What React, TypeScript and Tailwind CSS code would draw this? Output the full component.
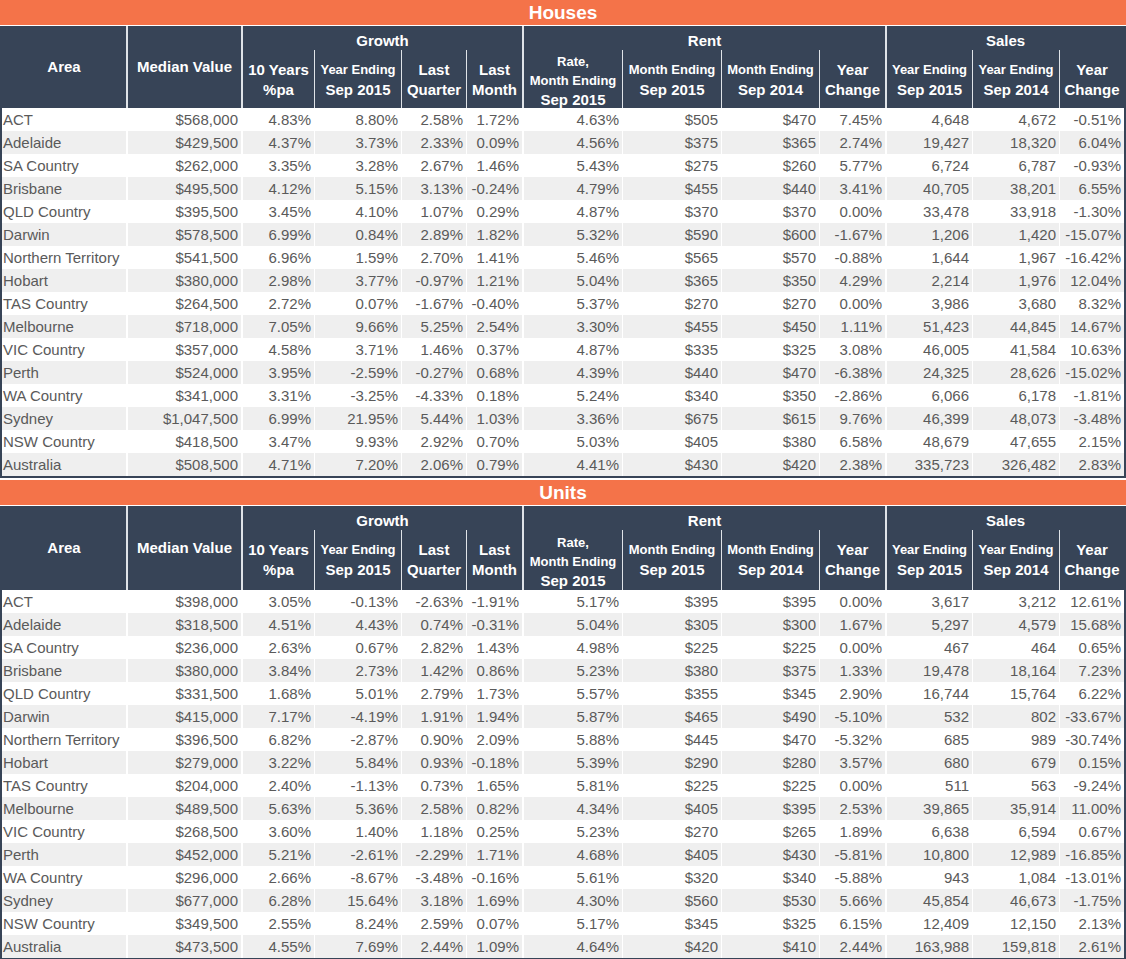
import React from 'react';

type Row = [string, ...string[]];

const houses: Row[] = [
  ['ACT', '$568,000', '4.83%', '8.80%', '2.58%', '1.72%', '4.63%', '$505', '$470', '7.45%', '4,648', '4,672', '-0.51%'],
  ['Adelaide', '$429,500', '4.37%', '3.73%', '2.33%', '0.09%', '4.56%', '$375', '$365', '2.74%', '19,427', '18,320', '6.04%'],
  ['SA Country', '$262,000', '3.35%', '3.28%', '2.67%', '1.46%', '5.43%', '$275', '$260', '5.77%', '6,724', '6,787', '-0.93%'],
  ['Brisbane', '$495,500', '4.12%', '5.15%', '3.13%', '-0.24%', '4.79%', '$455', '$440', '3.41%', '40,705', '38,201', '6.55%'],
  ['QLD Country', '$395,500', '3.45%', '4.10%', '1.07%', '0.29%', '4.87%', '$370', '$370', '0.00%', '33,478', '33,918', '-1.30%'],
  ['Darwin', '$578,500', '6.99%', '0.84%', '2.89%', '1.82%', '5.32%', '$590', '$600', '-1.67%', '1,206', '1,420', '-15.07%'],
  ['Northern Territory', '$541,500', '6.96%', '1.59%', '2.70%', '1.41%', '5.46%', '$565', '$570', '-0.88%', '1,644', '1,967', '-16.42%'],
  ['Hobart', '$380,000', '2.98%', '3.77%', '-0.97%', '1.21%', '5.04%', '$365', '$350', '4.29%', '2,214', '1,976', '12.04%'],
  ['TAS Country', '$264,500', '2.72%', '0.07%', '-1.67%', '-0.40%', '5.37%', '$270', '$270', '0.00%', '3,986', '3,680', '8.32%'],
  ['Melbourne', '$718,000', '7.05%', '9.66%', '5.25%', '2.54%', '3.30%', '$455', '$450', '1.11%', '51,423', '44,845', '14.67%'],
  ['VIC Country', '$357,000', '4.58%', '3.71%', '1.46%', '0.37%', '4.87%', '$335', '$325', '3.08%', '46,005', '41,584', '10.63%'],
  ['Perth', '$524,000', '3.95%', '-2.59%', '-0.27%', '0.68%', '4.39%', '$440', '$470', '-6.38%', '24,325', '28,626', '-15.02%'],
  ['WA Country', '$341,000', '3.31%', '-3.25%', '-4.33%', '0.18%', '5.24%', '$340', '$350', '-2.86%', '6,066', '6,178', '-1.81%'],
  ['Sydney', '$1,047,500', '6.99%', '21.95%', '5.44%', '1.03%', '3.36%', '$675', '$615', '9.76%', '46,399', '48,073', '-3.48%'],
  ['NSW Country', '$418,500', '3.47%', '9.93%', '2.92%', '0.70%', '5.03%', '$405', '$380', '6.58%', '48,679', '47,655', '2.15%'],
  ['Australia', '$508,500', '4.71%', '7.20%', '2.06%', '0.79%', '4.41%', '$430', '$420', '2.38%', '335,723', '326,482', '2.83%'],
];

const units: Row[] = [
  ['ACT', '$398,000', '3.05%', '-0.13%', '-2.63%', '-1.91%', '5.17%', '$395', '$395', '0.00%', '3,617', '3,212', '12.61%'],
  ['Adelaide', '$318,500', '4.51%', '4.43%', '0.74%', '-0.31%', '5.04%', '$305', '$300', '1.67%', '5,297', '4,579', '15.68%'],
  ['SA Country', '$236,000', '2.63%', '0.67%', '2.82%', '1.43%', '4.98%', '$225', '$225', '0.00%', '467', '464', '0.65%'],
  ['Brisbane', '$380,000', '3.84%', '2.73%', '1.42%', '0.86%', '5.23%', '$380', '$375', '1.33%', '19,478', '18,164', '7.23%'],
  ['QLD Country', '$331,500', '1.68%', '5.01%', '2.79%', '1.73%', '5.57%', '$355', '$345', '2.90%', '16,744', '15,764', '6.22%'],
  ['Darwin', '$415,000', '7.17%', '-4.19%', '1.91%', '1.94%', '5.87%', '$465', '$490', '-5.10%', '532', '802', '-33.67%'],
  ['Northern Territory', '$396,500', '6.82%', '-2.87%', '0.90%', '2.09%', '5.88%', '$445', '$470', '-5.32%', '685', '989', '-30.74%'],
  ['Hobart', '$279,000', '3.22%', '5.84%', '0.93%', '-0.18%', '5.39%', '$290', '$280', '3.57%', '680', '679', '0.15%'],
  ['TAS Country', '$204,000', '2.40%', '-1.13%', '0.73%', '1.65%', '5.81%', '$225', '$225', '0.00%', '511', '563', '-9.24%'],
  ['Melbourne', '$489,500', '5.63%', '5.36%', '2.58%', '0.82%', '4.34%', '$405', '$395', '2.53%', '39,865', '35,914', '11.00%'],
  ['VIC Country', '$268,500', '3.60%', '1.40%', '1.18%', '0.25%', '5.23%', '$270', '$265', '1.89%', '6,638', '6,594', '0.67%'],
  ['Perth', '$452,000', '5.21%', '-2.61%', '-2.29%', '1.71%', '4.68%', '$405', '$430', '-5.81%', '10,800', '12,989', '-16.85%'],
  ['WA Country', '$296,000', '2.66%', '-8.67%', '-3.48%', '-0.16%', '5.61%', '$320', '$340', '-5.88%', '943', '1,084', '-13.01%'],
  ['Sydney', '$677,000', '6.28%', '15.64%', '3.18%', '1.69%', '4.30%', '$560', '$530', '5.66%', '45,854', '46,673', '-1.75%'],
  ['NSW Country', '$349,500', '2.55%', '8.24%', '2.59%', '0.07%', '5.17%', '$345', '$325', '6.15%', '12,409', '12,150', '2.13%'],
  ['Australia', '$473,500', '4.55%', '7.69%', '2.44%', '1.09%', '4.64%', '$420', '$410', '2.44%', '163,988', '159,818', '2.61%'],
];

const cols = 'grid grid-cols-[126px_115px_72px_87px_65px_57px_99px_99px_98px_67px_86px_87px_64px]';

// white divider after each column; wider ones at group edges
const divider = [
  'border-r-2', 'border-r-2', 'border-r', 'border-r', 'border-r', 'border-r-2',
  'border-r', 'border-r', 'border-r', 'border-r-2', 'border-r', 'border-r', '',
];

const Sub = ({ top, bottom, last, small }: { top: string; bottom: string; last?: boolean; small?: boolean }) => (
  <div className={`flex flex-col items-center justify-center border-[#dfe3e8] ${last ? 'border-r-2' : 'border-r'}`}>
    <span className={`${small ? 'text-[13px]' : 'text-[15px]'} leading-[20px]`}>{top}</span>
    <span className="text-[15px] leading-[20px]">{bottom}</span>
  </div>
);

const Section = ({ title, rows, headH }: { title: string; rows: Row[]; headH: string }) => (
  <div>
    <div className="h-[25px] bg-[#f47349] flex items-center justify-center text-white font-bold text-[19px] leading-none">
      {title}
    </div>
    <div className="mt-px border-x-2 border-b-2 border-[#374457]">
      <div className={`${cols} grid-rows-[24px_1fr] ${headH} bg-[#374457] text-white font-bold`}>
        <div className="row-span-2 flex items-center justify-center text-[15px] border-r-2 border-[#dfe3e8]">Area</div>
        <div className="row-span-2 flex items-center justify-center text-[15px] border-r-2 border-[#dfe3e8]">Median Value</div>
        <div className="col-span-4 flex items-end justify-center pb-[2px] text-[15px] leading-none border-r-2 border-[#dfe3e8]">Growth</div>
        <div className="col-span-4 flex items-end justify-center pb-[2px] text-[15px] leading-none border-r-2 border-[#dfe3e8]">Rent</div>
        <div className="col-span-3 flex items-end justify-center pb-[2px] text-[15px] leading-none">Sales</div>

        <Sub top="10 Years" bottom="%pa" />
        <Sub top="Year Ending" bottom="Sep 2015" small />
        <Sub top="Last" bottom="Quarter" />
        <Sub top="Last" bottom="Month" last />
        <div className="flex flex-col items-center justify-center border-r border-[#dfe3e8] pt-[2px]">
          <span className="text-[13px] leading-[19px]">Rate,</span>
          <span className="text-[13px] leading-[19px]">Month Ending</span>
          <span className="text-[15px] leading-[19px]">Sep 2015</span>
        </div>
        <Sub top="Month Ending" bottom="Sep 2015" small />
        <Sub top="Month Ending" bottom="Sep 2014" small />
        <Sub top="Year" bottom="Change" last />
        <Sub top="Year Ending" bottom="Sep 2015" small />
        <Sub top="Year Ending" bottom="Sep 2014" small />
        <div className="flex flex-col items-center justify-center">
          <span className="text-[15px] leading-[20px]">Year</span>
          <span className="text-[15px] leading-[20px]">Change</span>
        </div>
      </div>

      {rows.map((r, i) => (
        <div key={r[0]} className={`${cols} h-[23px] text-[15px] leading-[23px] text-[#5a5a5a] ${i % 2 ? 'bg-[#efefef]' : 'bg-white'}`}>
          {r.map((v, j) => (
            <div
              key={j}
              className={`${divider[j]} border-white whitespace-nowrap ${j === 0 ? 'pl-[1px] text-left' : 'pr-[3px] text-right'}`}
            >
              {v}
            </div>
          ))}
        </div>
      ))}
    </div>
  </div>
);

export default function App() {
  return (
    <div className="w-[1126px] bg-white font-['Liberation_Sans',Arial,sans-serif]">
      <Section title="Houses" rows={houses} headH="h-[82px]" />
      <div className="mt-[2px]">
        <Section title="Units" rows={units} headH="h-[84px]" />
      </div>
    </div>
  );
}
